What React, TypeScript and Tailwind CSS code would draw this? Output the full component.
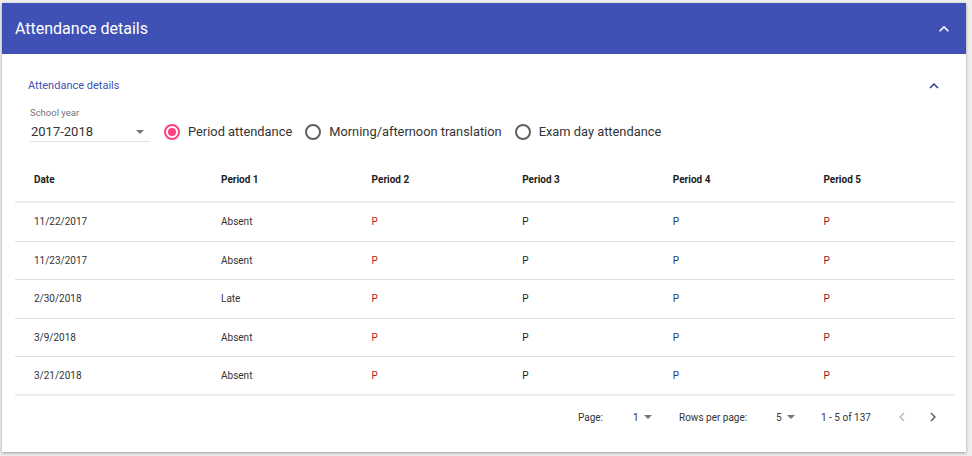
const font = { fontFamily: "Roboto, 'Liberation Sans', sans-serif" }

const rows = [
    { date: "11/22/2017", p1: "Absent" },
    { date: "11/23/2017", p1: "Absent" },
    { date: "2/30/2018", p1: "Late" },
    { date: "3/9/2018", p1: "Absent" },
    { date: "3/21/2018", p1: "Absent" },
]

function ExpandLess({ className }: { className?: string }) {
    return (
        <svg viewBox="0 0 24 24" className={className} fill="currentColor">
            <path d="M12 8l-6 6 1.41 1.41L12 10.83l4.59 4.58L18 14z" />
        </svg>
    )
}

function ChevronLeft({ className }: { className?: string }) {
    return (
        <svg viewBox="0 0 24 24" className={className} fill="currentColor">
            <path d="M15.41 7.41L14 6l-6 6 6 6 1.41-1.41L10.83 12z" />
        </svg>
    )
}

function ChevronRight({ className }: { className?: string }) {
    return (
        <svg viewBox="0 0 24 24" className={className} fill="currentColor">
            <path d="M10 6L8.59 7.41 13.17 12l-4.58 4.59L10 18l6-6z" />
        </svg>
    )
}

function Caret() {
    return <span className="inline-block w-0 h-0 border-l-[4px] border-r-[4px] border-t-[4px] border-l-transparent border-r-transparent border-t-[#757575]" />
}

function Radio({ label, checked }: { label: string; checked?: boolean }) {
    return (
        <label className="flex items-center gap-[8px]">
            <span
                className={
                    checked
                        ? "w-[16px] h-[16px] rounded-full border-2 border-[#ff4081] flex items-center justify-center"
                        : "w-[16px] h-[16px] rounded-full border-2 border-[#616161]"
                }
            >
                {checked && <span className="w-[8px] h-[8px] rounded-full bg-[#ff4081]" />}
            </span>
            <span className="text-[12.85px] text-[#333]">{label}</span>
        </label>
    )
}

export default function App() {
    return (
        <div className="w-[972px] h-[456px] bg-[#eeeeee] pt-[3px] pl-[2px]" style={font}>
            <div className="w-[964px] h-[449px] bg-white shadow-[0_1px_3px_rgba(0,0,0,0.35)]">
                {/* Top bar */}
                <div className="h-[51px] bg-[#3f51b5] flex items-center justify-between pl-[13px] pr-[12px]">
                    <span className="text-[16px] text-white">Attendance details</span>
                    <ExpandLess className="w-[20px] h-[20px] text-white" />
                </div>

                <div className="pl-[13px] pr-[11px]">
                    <div className="mt-[22px] h-[20px] flex items-center justify-between pl-[13px] pr-[12px]">
                        <span className="text-[11px] text-[#3f51b5]">Attendance details</span>
                        <ExpandLess className="w-[18px] h-[18px] text-[#283593]" />
                    </div>

                    <div className="mt-[12px] pl-[15px] flex items-end gap-[14px]">
                        <div className="w-[120px]">
                            <div className="text-[9.5px] leading-[10px] text-[#757575]">School year</div>
                            <div className="mt-[5px] h-[19px] flex items-center justify-between pl-[1px] pr-[6px] border-b border-[#e0e0e0]">
                                <span className="text-[13px] text-[#333]">2017-2018</span>
                                <Caret />
                            </div>
                        </div>
                        <div className="flex items-center gap-[13px] h-[19px] mb-[1px]">
                            <Radio label="Period attendance" checked />
                            <Radio label="Morning/afternoon translation" />
                            <Radio label="Exam day attendance" />
                        </div>
                    </div>

                    {/* Table */}
                    <div className="mt-[15px]">
                        <div className="grid grid-cols-[187px_repeat(5,1fr)] h-[46px] items-center border-b-2 border-[#eeeeee] text-[10px] font-bold text-[#212121]">
                            <div className="pl-[19px]">Date</div>
                            <div className="pl-[19px]">Period 1</div>
                            <div className="pl-[19px]">Period 2</div>
                            <div className="pl-[19px]">Period 3</div>
                            <div className="pl-[19px]">Period 4</div>
                            <div className="pl-[19px]">Period 5</div>
                        </div>
                        {rows.map((r, i) => (
                            <div
                                key={r.date}
                                className={
                                    i === rows.length - 1
                                        ? "grid grid-cols-[187px_repeat(5,1fr)] h-[39px] items-center border-b-2 border-[#eeeeee] text-[10px] text-[#333]"
                                        : "grid grid-cols-[187px_repeat(5,1fr)] h-[38.5px] items-center border-b border-[#e0e0e0] text-[10px] text-[#333]"
                                }
                            >
                                <div className="pl-[19px]">{r.date}</div>
                                <div className="pl-[19px]">{r.p1}</div>
                                <div className="pl-[19px] text-[#b71c1c]">P</div>
                                <div className="pl-[19px] text-[#212121]">P</div>
                                <div className="pl-[19px] text-[#1f3a60]">P</div>
                                <div className="pl-[19px] text-[#8b1a1a]">P</div>
                            </div>
                        ))}

                        {/* Pagination */}
                        <div className="h-[42px] flex items-center justify-end pr-[10px] text-[10px] text-[#333]">
                            <span className="w-[55px]">Page:</span>
                            <span className="w-[46px] flex items-center gap-[5px]">
                                1 <Caret />
                            </span>
                            <span className="w-[97px]">Rows per page:</span>
                            <span className="w-[45px] flex items-center gap-[5px]">
                                5 <Caret />
                            </span>
                            <span className="w-[69px]">1 - 5 of 137</span>
                            <ChevronLeft className="w-[18px] h-[18px] mx-[3px] text-[#bdbdbd]" />
                            <span className="w-[7px]" />
                            <ChevronRight className="w-[18px] h-[18px] mx-[3px] text-[#616161]" />
                        </div>
                    </div>
                </div>
            </div>
        </div>
    )
}
